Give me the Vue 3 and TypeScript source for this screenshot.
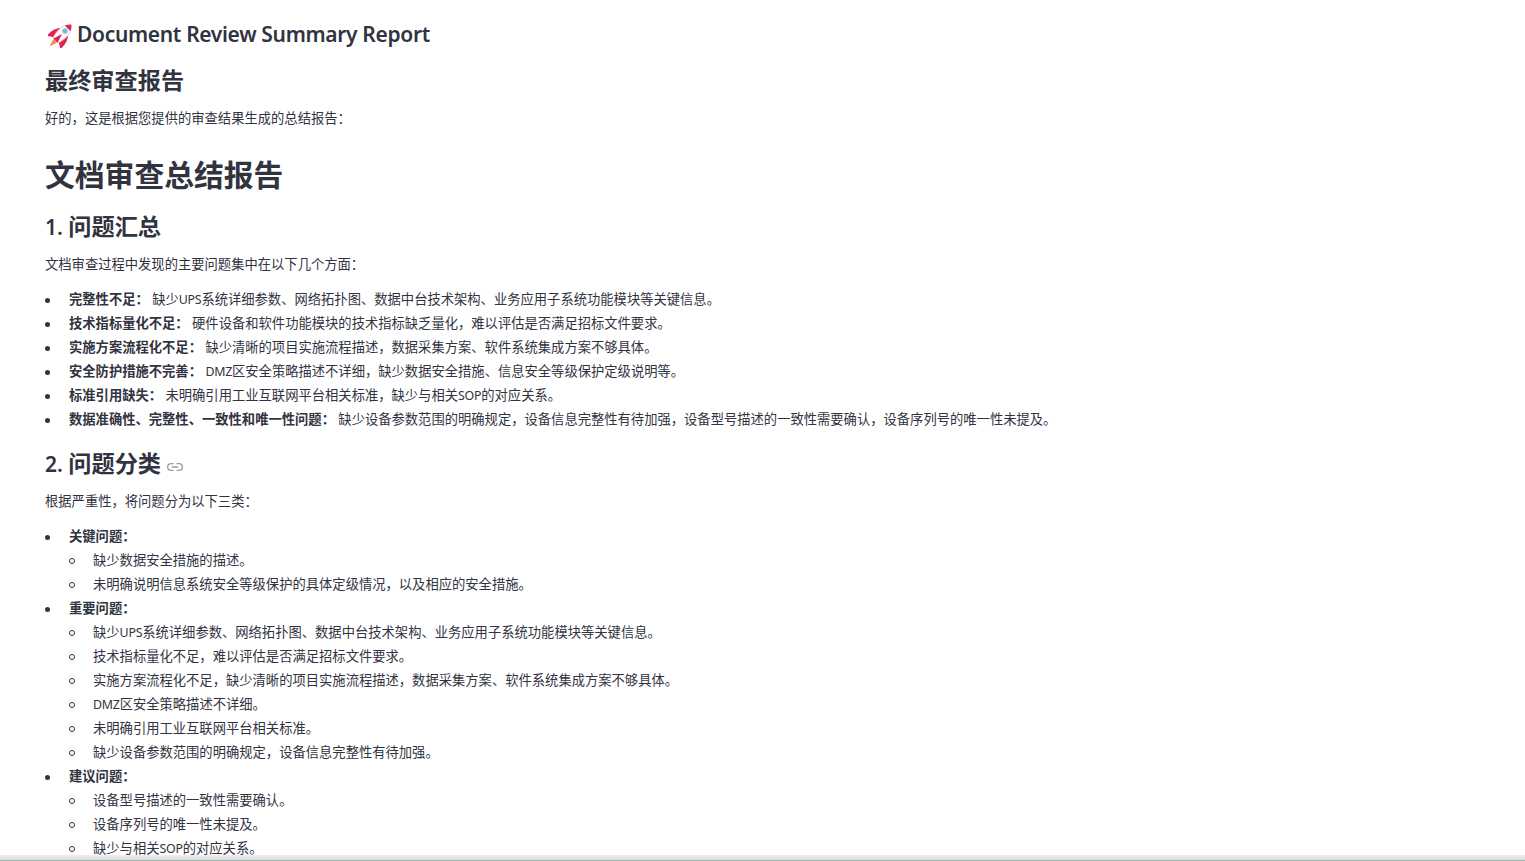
<script setup lang="ts">
const top = [
  ['完整性不足：', '缺少UPS系统详细参数、网络拓扑图、数据中台技术架构、业务应用子系统功能模块等关键信息。'],
  ['技术指标量化不足：', '硬件设备和软件功能模块的技术指标缺乏量化，难以评估是否满足招标文件要求。'],
  ['实施方案流程化不足：', '缺少清晰的项目实施流程描述，数据采集方案、软件系统集成方案不够具体。'],
  ['安全防护措施不完善：', 'DMZ区安全策略描述不详细，缺少数据安全措施、信息安全等级保护定级说明等。'],
  ['标准引用缺失：', '未明确引用工业互联网平台相关标准，缺少与相关SOP的对应关系。'],
  ['数据准确性、完整性、一致性和唯一性问题：', '缺少设备参数范围的明确规定，设备信息完整性有待加强，设备型号描述的一致性需要确认，设备序列号的唯一性未提及。'],
]
const groups = [
  { t: '关键问题：', items: ['缺少数据安全措施的描述。', '未明确说明信息系统安全等级保护的具体定级情况，以及相应的安全措施。'] },
  { t: '重要问题：', items: ['缺少UPS系统详细参数、网络拓扑图、数据中台技术架构、业务应用子系统功能模块等关键信息。', '技术指标量化不足，难以评估是否满足招标文件要求。', '实施方案流程化不足，缺少清晰的项目实施流程描述，数据采集方案、软件系统集成方案不够具体。', 'DMZ区安全策略描述不详细。', '未明确引用工业互联网平台相关标准。', '缺少设备参数范围的明确规定，设备信息完整性有待加强。'] },
  { t: '建议问题：', items: ['设备型号描述的一致性需要确认。', '设备序列号的唯一性未提及。', '缺少与相关SOP的对应关系。'] },
]
const parts = (s: string): string[] => s.split(/([A-Z]+)/).filter(Boolean)
const isLatin = (s: string): boolean => /^[A-Z]+$/.test(s)
</script>

<template>
  <div class="page">
    <main class="content">
      <h1 class="title">
        <svg class="rocket" viewBox="0 0 24 24" width="24" height="24" aria-label="🚀">
          <g transform="rotate(45 12 12)">
            <path d="M9.5 19h5L12 27z" fill="#f58a52"/>
            <path d="M7.5 5C3.5 9 2 14.5 2.5 21L9.5 16.5z" fill="#e0244f"/>
            <path d="M16.5 5C20.5 9 22 14.5 21.5 21L14.5 16.5z" fill="#e0244f"/>
            <path d="M12-4C18 1 18.6 9 15.5 18.5H8.5C5.4 9 6 1 12-4z" fill="#fff" stroke="#f3bccb" stroke-width=".8"/>
            <path d="M12-4C13.9-2.4 15.2-.4 16 1.2H8C8.8-.4 10.1-2.4 12-4z" fill="#e0244f"/>
            <path d="M12 9 15 18.5H9z" fill="#e0244f"/>
            <circle cx="12" cy="5" r="2.8" fill="#6fb8ea" stroke="#cfd8e3" stroke-width=".8"/>
          </g>
        </svg>Document Review Summary Report
      </h1>
      <h2 class="sub">最终审查报告</h2>
      <p class="para">好的，这是根据您提供的审查结果生成的总结报告：</p>
      <h1 class="big">文档审查总结报告</h1>
      <h2 class="sec"><span class="num">1. </span>问题汇总</h2>
      <p class="para">文档审查过程中发现的主要问题集中在以下几个方面：</p>
      <ul class="list">
        <li v-for="r in top" :key="r[0]"><strong>{{ r[0] }}</strong>&nbsp;<template v-for="(p, n) in parts(r[1])" :key="n"><span v-if="isLatin(p)" class="latin">{{ p }}</span><template v-else>{{ p }}</template></template></li>
      </ul>
      <h2 class="sec second"><span class="num">2. </span>问题分类
        <svg class="link" viewBox="0 0 24 24" width="16" height="16" fill="none" stroke="#9a9ba3" stroke-width="2" stroke-linecap="round" stroke-linejoin="round"><path d="M15 7h3a5 5 0 0 1 0 10h-3m-6 0H6A5 5 0 0 1 6 7h3"/><line x1="8" y1="12" x2="16" y2="12"/></svg>
      </h2>
      <p class="para">根据严重性，将问题分为以下三类：</p>
      <ul class="list">
        <li v-for="g in groups" :key="g.t"><strong>{{ g.t }}</strong>
          <ul class="nested"><li v-for="i in g.items" :key="i"><template v-for="(p, n) in parts(i)" :key="n"><span v-if="isLatin(p)" class="latin">{{ p }}</span><template v-else>{{ p }}</template></template></li></ul>
        </li>
      </ul>
    </main>
    <div class="footer"></div>
  </div>
</template>

<style>
html, body { margin: 0; height: 100%; overflow: hidden; background: #fff; }
</style>

<style scoped>
.page { width: 1525px; height: 861px; overflow: hidden; position: relative; background: #fff; color: #31333f; font-family: "Lato", "Noto Sans CJK SC", sans-serif; font-size: 13.3px; line-height: 24px; }
.content { padding: 14px 45px 0; }
.title { margin: 0; font-family: "Noto Sans", sans-serif; font-size: 21px; letter-spacing: -0.33px; line-height: 40px; font-weight: 600; }
.rocket { vertical-align: -6px; margin: 0 5px 0 3px; }
.sub { margin: 6px 0 0; font-size: 23.2px; line-height: 40px; font-weight: 600; }
.para { margin: 0; padding-top: 6px; }
.big { margin: 21px 0 0; font-size: 29.8px; line-height: 48px; font-weight: 700; }
.sec { margin: 7px 0 0; font-size: 23.2px; line-height: 40px; font-weight: 600; }
.num { font-family: "Noto Sans", sans-serif; font-size: 21px; line-height: 0; }
.second { margin-top: 12px; }
.link { vertical-align: -3px; margin-left: 0; line-height: 0; }
.latin { font-family: "Noto Sans", sans-serif; font-size: 12.4px; letter-spacing: -0.25px; line-height: 0; }
.list { margin: 11px 0 0; padding: 0 0 0 24px; list-style: none; }
.list > li::before { content: ""; display: inline-block; width: 5px; height: 5px; border-radius: 50%; background: #31333f; margin-left: -24px; margin-right: 19px; vertical-align: 1px; }
.nested { margin: 0; padding-left: 24px; list-style: none; }
.nested > li::before { content: ""; display: inline-block; width: 4px; height: 4px; border: 1px solid #31333f; border-radius: 50%; margin-left: -24px; margin-right: 18px; vertical-align: 1px; }
strong { font-weight: 700; }
.footer { position: absolute; left: 0; right: 0; bottom: 0; height: 6px; background: linear-gradient(#efefef, #dcdcdc); border-bottom: 1px solid #9fb5b0; box-sizing: border-box; }
</style>
